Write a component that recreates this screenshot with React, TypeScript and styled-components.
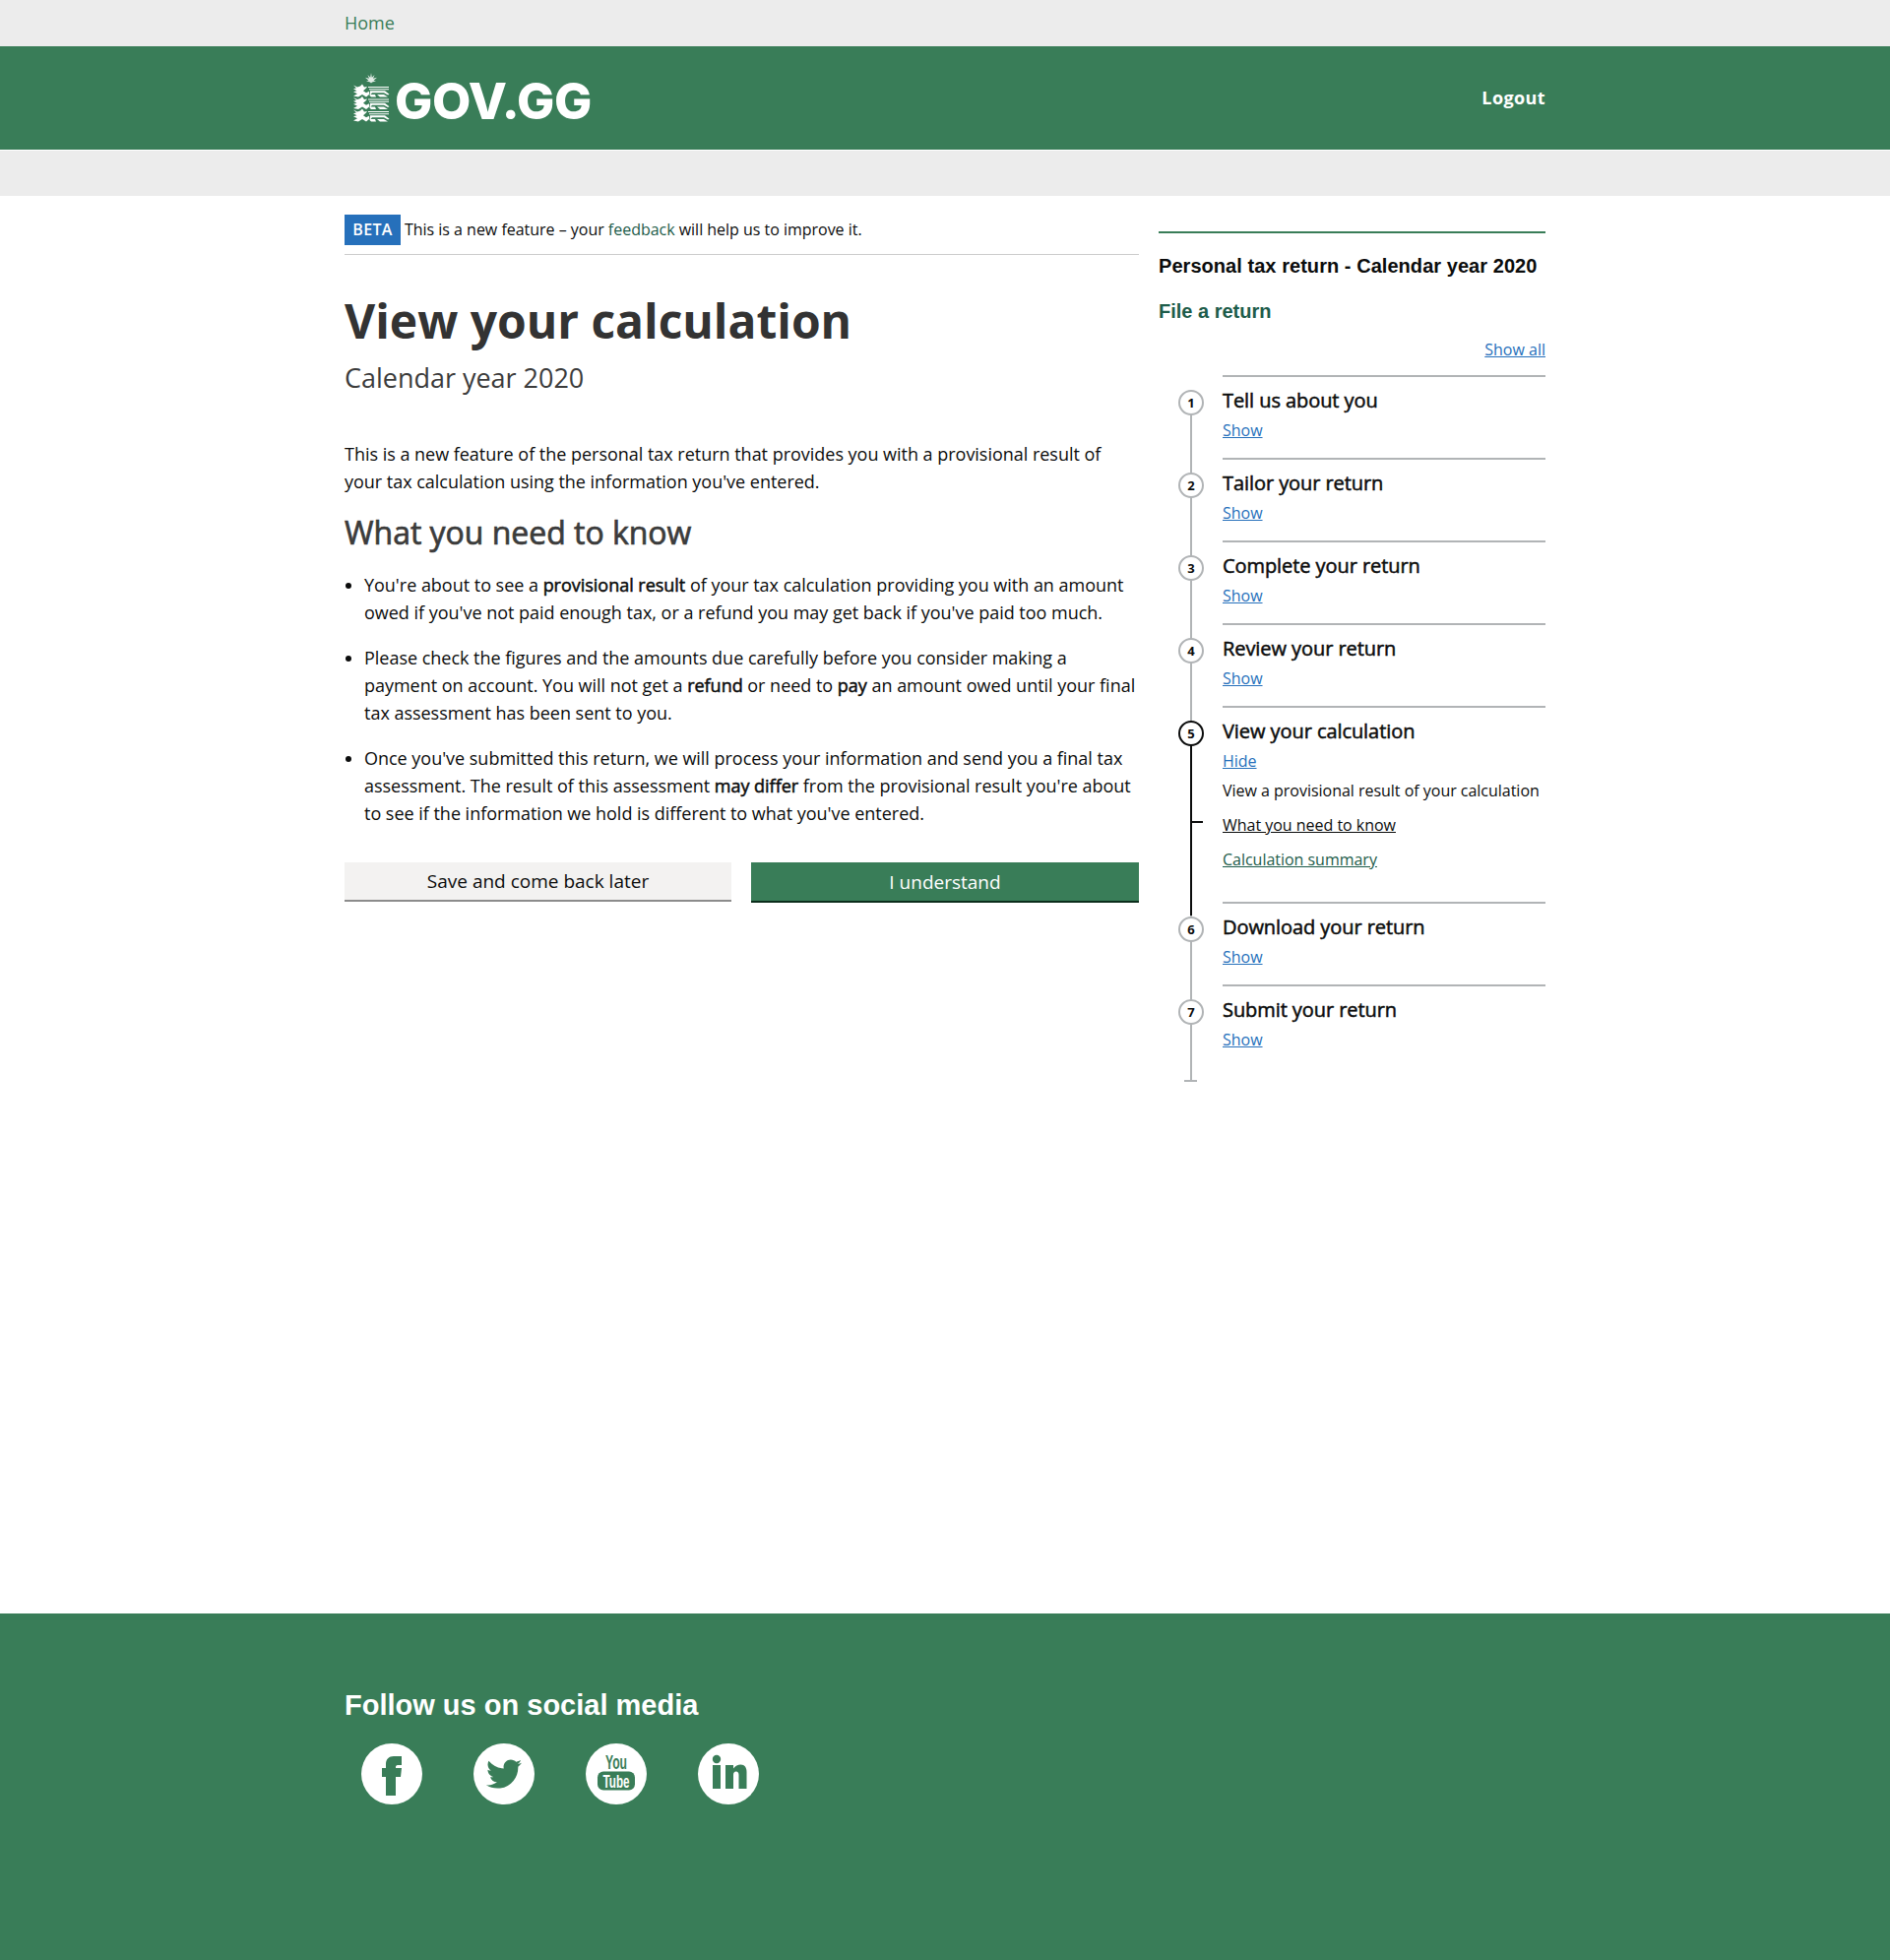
import React from 'react';
import styled, { createGlobalStyle } from 'styled-components';
import { FaTwitter } from 'react-icons/fa';

const GREEN = '#397d58';
const Global = createGlobalStyle`
  html, body { margin: 0; padding: 0; background: #fff; }
  body { font-family: "Open Sans", sans-serif; color: #0b0c0c; }
  * { box-sizing: border-box; }
`;
const Page = styled.div`min-height: 1991px; display: flex; flex-direction: column;`;
const Wrap = styled.div`width: 1220px; margin: 0 auto;`;
const TopBar = styled.div`height: 47px; background: #ececec;`;
const HomeLink = styled.a`display: block; font-size: 18px; line-height: 47px; color: ${GREEN};`;
const Masthead = styled.header`height: 105px; background: ${GREEN};`;
const MastInner = styled(Wrap)`display: flex; justify-content: space-between; align-items: center; height: 105px;`;
const Logo = styled.div`display: flex; align-items: flex-end; padding: 0 0 0 8px; margin-top: -2px; color: #fff;`;
const LogoText = styled.span`font-family: Inter, sans-serif; font-weight: 800; font-size: 51px; line-height: 50px; letter-spacing: -0.4px; margin-left: 5px; position: relative; top: 4px;`;
const Logout = styled.a`font-size: 18px; font-weight: 700; letter-spacing: 0.4px; color: #fff; margin-top: -2px;`;
const SubBar = styled.div`height: 46px; background: #ececec; margin-top: 1px;`;
const Main = styled(Wrap)`flex: 1; display: grid; grid-template-columns: 807px 393px; column-gap: 20px;`;
const Left = styled.section`padding-top: 19px; letter-spacing: -0.02px;`;
const BetaRow = styled.div`display: flex; align-items: flex-start; height: 41px; border-bottom: 1px solid #cccccc; font-size: 16px; line-height: 31px;`;
const BetaTag = styled.strong`background: #2670bb; color: #fff; font-weight: 600; letter-spacing: 0.3px; width: 57px; height: 31px; line-height: 31px; text-align: center; margin-right: 4px;`;
const GreenLink = styled.a`color: #1d5c4a;`;
const H1 = styled.h1`margin: 35px 0 0; font-size: 48px; line-height: 64px; font-weight: 700; color: #333;`;
const Sub = styled.div`font-size: 27px; line-height: 36px; color: #3c3c3c; margin-top: 7.5px;`;
const Para = styled.p`margin: 45.5px 0 0; font-size: 18px; line-height: 28px;`;
const H2 = styled.h2`margin: 16px 0 0; font-size: 32px; line-height: 44px; font-weight: 400; -webkit-text-stroke: 0.7px currentColor; color: #3b3b3b;`;
const List = styled.ul`margin: 17px 0 0; padding: 0 0 0 20px; font-size: 18px; line-height: 28px;`;
const Item = styled.li`margin-bottom: 18px;`;
const Strong = styled.strong`font-weight: 400; -webkit-text-stroke: 0.5px currentColor;`;
const Buttons = styled.div`display: grid; grid-template-columns: 393px 394px; column-gap: 20px; margin-top: 36px;`;
const Btn = styled.button<{ $primary?: boolean }>`
  height: ${p => (p.$primary ? 41 : 40)}px; border: 0; border-bottom: 2px solid ${p => (p.$primary ? '#0b2d1b' : '#8c8c8c')};
  background: ${p => (p.$primary ? GREEN : '#f3f2f1')}; color: ${p => (p.$primary ? '#fff' : '#0b0c0c')};
  font-family: "Open Sans", sans-serif; font-size: 19px; padding: 0;
`;
const Right = styled.aside`padding-top: 36px;`;
const SideTop = styled.div`border-top: 2px solid ${GREEN}; padding-top: 21px;`;
const SideTitle = styled.div`font-family: "Liberation Sans", sans-serif; font-weight: 700; font-size: 20px; letter-spacing: 0.05px; line-height: 24px;`;
const SideSub = styled.div`font-family: "Liberation Sans", sans-serif; font-weight: 700; font-size: 20px; line-height: 24px; color: #1d5c4a; margin-top: 22px;`;
const ShowAll = styled.div`text-align: right; font-size: 16px; line-height: 22px; margin-top: 16px;`;
const BlueLink = styled.a`color: #2670bb; text-decoration: underline;`;
const Steps = styled.ol`list-style: none; margin: 15px 0 0; padding: 0 0 0 65px; position: relative;
  &::after { content: ''; position: absolute; left: 26px; bottom: 0; width: 13px; height: 2px; background: #b1b4b6; }
`;
const Step = styled.li<{ $active?: boolean }>`
  position: relative; border-top: 2px solid #b1b4b6; height: ${p => (p.$active ? 199 : 84)}px; padding-top: 10px;
  &::before { content: ''; position: absolute; left: -33px; top: -2px; bottom: 0; width: 2px; background: #b1b4b6; }
  &:first-child::before { top: 16px; }
  &::after { content: ''; position: absolute; left: -33px; top: 16px; bottom: -14px; z-index: 1; width: ${p => (p.$active ? 2 : 0)}px; background: #0b0c0c; }
`;
const LastStep = styled(Step)`height: 99px;`;
const Circle = styled.span<{ $active?: boolean }>`
  position: absolute; left: -45px; top: 13px; z-index: 2; width: 26px; height: 26px; border-radius: 50%;
  border: 2px solid ${p => (p.$active ? '#0b0c0c' : '#b1b4b6')}; background: #fff;
  font-family: "Open Sans", sans-serif; font-weight: 700; font-size: 13px; line-height: 22px; text-align: center;
`;
const StepTitle = styled.div`font-size: 20px; font-weight: 400; -webkit-text-stroke: 0.5px currentColor; letter-spacing: -0.07px; line-height: 28px;`;
const Toggle = styled.div`font-size: 16px; line-height: 22px; margin-top: 5px; letter-spacing: -0.02px;`;
const StepText = styled.div`font-size: 16px; line-height: 22px; margin-top: 8px; letter-spacing: -0.02px;`;
const SubLink = styled.div<{ $current?: boolean }>`
  position: relative; font-size: 16px; line-height: 22px; margin-top: 13px; letter-spacing: -0.02px;
  a { color: ${p => (p.$current ? '#0b0c0c' : '#1d5c4a')}; text-decoration: underline; }
  ${p => p.$current ? `&::before { content: ''; position: absolute; left: -33px; top: 7px; width: 13px; height: 2px; background: #0b0c0c; }` : ''}
`;
const Footer = styled.footer`height: 352px; background: ${GREEN}; color: #fff;`;
const FootHead = styled.h2`margin: 0; padding-top: 75px; font-family: "Liberation Sans", sans-serif; font-size: 29px; line-height: 36px; font-weight: 700;`;
const Socials = styled.div`display: flex; gap: 52px; padding: 21px 0 0 17px;`;
const Social = styled.a`width: 62px; height: 62px; border-radius: 50%; background: #fff; color: ${GREEN}; display: flex; align-items: center; justify-content: center;`;

const Lion = ({ y }: { y: number }) => (
  <g transform={`translate(0 ${y})`} fill="#fff">
    <path d="M1 1 L5 3 L8 2 L10 0 L12 3 L15 2.5 L14 4 L11 7 L14 9 L17 7.5 L17 11 L14 13.5 L10 11 L6 13.5 L1 12.5 L5 10 L1 8 L4.5 7 L1 5 L4 4 Z" />
    <path d="M16 2.5 H37 V3.6 H16 Z M17 5 H37 V6 H17 Z" />
    <path d="M18 7 H33 L37.5 10.5 L36 11.5 L32 9 H20 L18.5 11 L23 11 L24 13.5 H19 L17.5 12 Z" />
    <path d="M25 11 H32 L36 13.5 H28 Z" />
  </g>
);
const Crest = () => (
  <svg width="38" height="50" viewBox="0 0 38 52" preserveAspectRatio="none" aria-hidden="true">
    <path d="M19 0 L19.8 5 L22.5 2 L21 6 L25 5 L21.5 8 L24 8.5 L20 10 L19 11 L18 10 L14 8.5 L16.5 8 L13 5 L17 6 L15.5 2 L18.2 5 Z" fill="#fff" opacity="0.85" />
    <Lion y={12} />
    <Lion y={25} />
    <Lion y={38} />
  </svg>
);
const Facebook = () => (
  <svg width="62" height="62" viewBox="0 0 62 62" aria-hidden="true">
    <path fill={GREEN} d="M25 53 V34 H21 V25 H25 V21 C25 16 28 13 33 13 H41 V22 H37 C35.5 22 35 23 35 24 V25 H41 L40 34 H35 V53 Z" />
  </svg>
);
const LinkedIn = () => (
  <svg width="62" height="62" viewBox="0 0 62 62" aria-hidden="true">
    <circle cx="19" cy="16" r="4.2" fill={GREEN} />
    <path fill={GREEN} d="M15 22 H23 V46 H15 Z M28 22 H36 V25.5 C38 23 40.5 21.5 43.5 21.5 C47.5 21.5 49.5 24.5 49.5 29 V46 H41.5 V32 C41.5 30 40.5 28.5 38.8 28.5 C37 28.5 36 30 36 32 V46 H28 Z" />
  </svg>
);
const YouTube = () => (
  <svg width="62" height="62" viewBox="0 0 62 62" aria-hidden="true">
    <text x="31" y="26" textAnchor="middle" fontFamily="'Liberation Sans', sans-serif" fontWeight="700" fontSize="20" textLength="22" lengthAdjust="spacingAndGlyphs" fill={GREEN}>You</text>
    <rect x="12" y="28.5" width="38" height="19" rx="6" fill={GREEN} />
    <text x="31" y="44.5" textAnchor="middle" fontFamily="'Liberation Sans', sans-serif" fontWeight="700" fontSize="18" textLength="27" lengthAdjust="spacingAndGlyphs" fill="#fff">Tube</text>
  </svg>
);

const steps = ['Tell us about you', 'Tailor your return', 'Complete your return', 'Review your return'];

export default function App() {
  return (
    <Page>
      <Global />
      <TopBar><Wrap><HomeLink>Home</HomeLink></Wrap></TopBar>
      <Masthead>
        <MastInner>
          <Logo><Crest /><LogoText>GOV.GG</LogoText></Logo>
          <Logout>Logout</Logout>
        </MastInner>
      </Masthead>
      <SubBar />
      <Main>
        <Left>
          <BetaRow><BetaTag>BETA</BetaTag><span>This is a new feature – your <GreenLink>feedback</GreenLink> will help us to improve it.</span></BetaRow>
          <H1>View your calculation</H1>
          <Sub>Calendar year 2020</Sub>
          <Para>This is a new feature of the personal tax return that provides you with a provisional result of your tax calculation using the information you've entered.</Para>
          <H2>What you need to know</H2>
          <List>
            <Item>You're about to see a <Strong>provisional result</Strong> of your tax calculation providing you with an amount owed if you've not paid enough tax, or a refund you may get back if you've paid too much.</Item>
            <Item>Please check the figures and the amounts due carefully before you consider making a payment on account. You will not get a <Strong>refund</Strong> or need to <Strong>pay</Strong> an amount owed until your final tax assessment has been sent to you.</Item>
            <Item>Once you've submitted this return, we will process your information and send you a final tax assessment. The result of this assessment <Strong>may differ</Strong> from the provisional result you're about to see if the information we hold is different to what you've entered.</Item>
          </List>
          <Buttons>
            <Btn>Save and come back later</Btn>
            <Btn $primary>I understand</Btn>
          </Buttons>
        </Left>
        <Right>
          <SideTop>
            <SideTitle>Personal tax return - Calendar year 2020</SideTitle>
            <SideSub>File a return</SideSub>
          </SideTop>
          <ShowAll><BlueLink>Show all</BlueLink></ShowAll>
          <Steps>
            {steps.map((s, i) => (
              <Step key={s}>
                <Circle>{i + 1}</Circle>
                <StepTitle>{s}</StepTitle>
                <Toggle><BlueLink>Show</BlueLink></Toggle>
              </Step>
            ))}
            <Step $active>
              <Circle $active>5</Circle>
              <StepTitle>View your calculation</StepTitle>
              <Toggle><BlueLink>Hide</BlueLink></Toggle>
              <StepText>View a provisional result of your calculation</StepText>
              <SubLink $current><a>What you need to know</a></SubLink>
              <SubLink><a>Calculation summary</a></SubLink>
            </Step>
            <Step>
              <Circle>6</Circle>
              <StepTitle>Download your return</StepTitle>
              <Toggle><BlueLink>Show</BlueLink></Toggle>
            </Step>
            <LastStep>
              <Circle>7</Circle>
              <StepTitle>Submit your return</StepTitle>
              <Toggle><BlueLink>Show</BlueLink></Toggle>
            </LastStep>
          </Steps>
        </Right>
      </Main>
      <Footer>
        <Wrap>
          <FootHead>Follow us on social media</FootHead>
          <Socials>
            <Social><Facebook /></Social>
            <Social><FaTwitter size={36} /></Social>
            <Social><YouTube /></Social>
            <Social><LinkedIn /></Social>
          </Socials>
        </Wrap>
      </Footer>
    </Page>
  );
}
